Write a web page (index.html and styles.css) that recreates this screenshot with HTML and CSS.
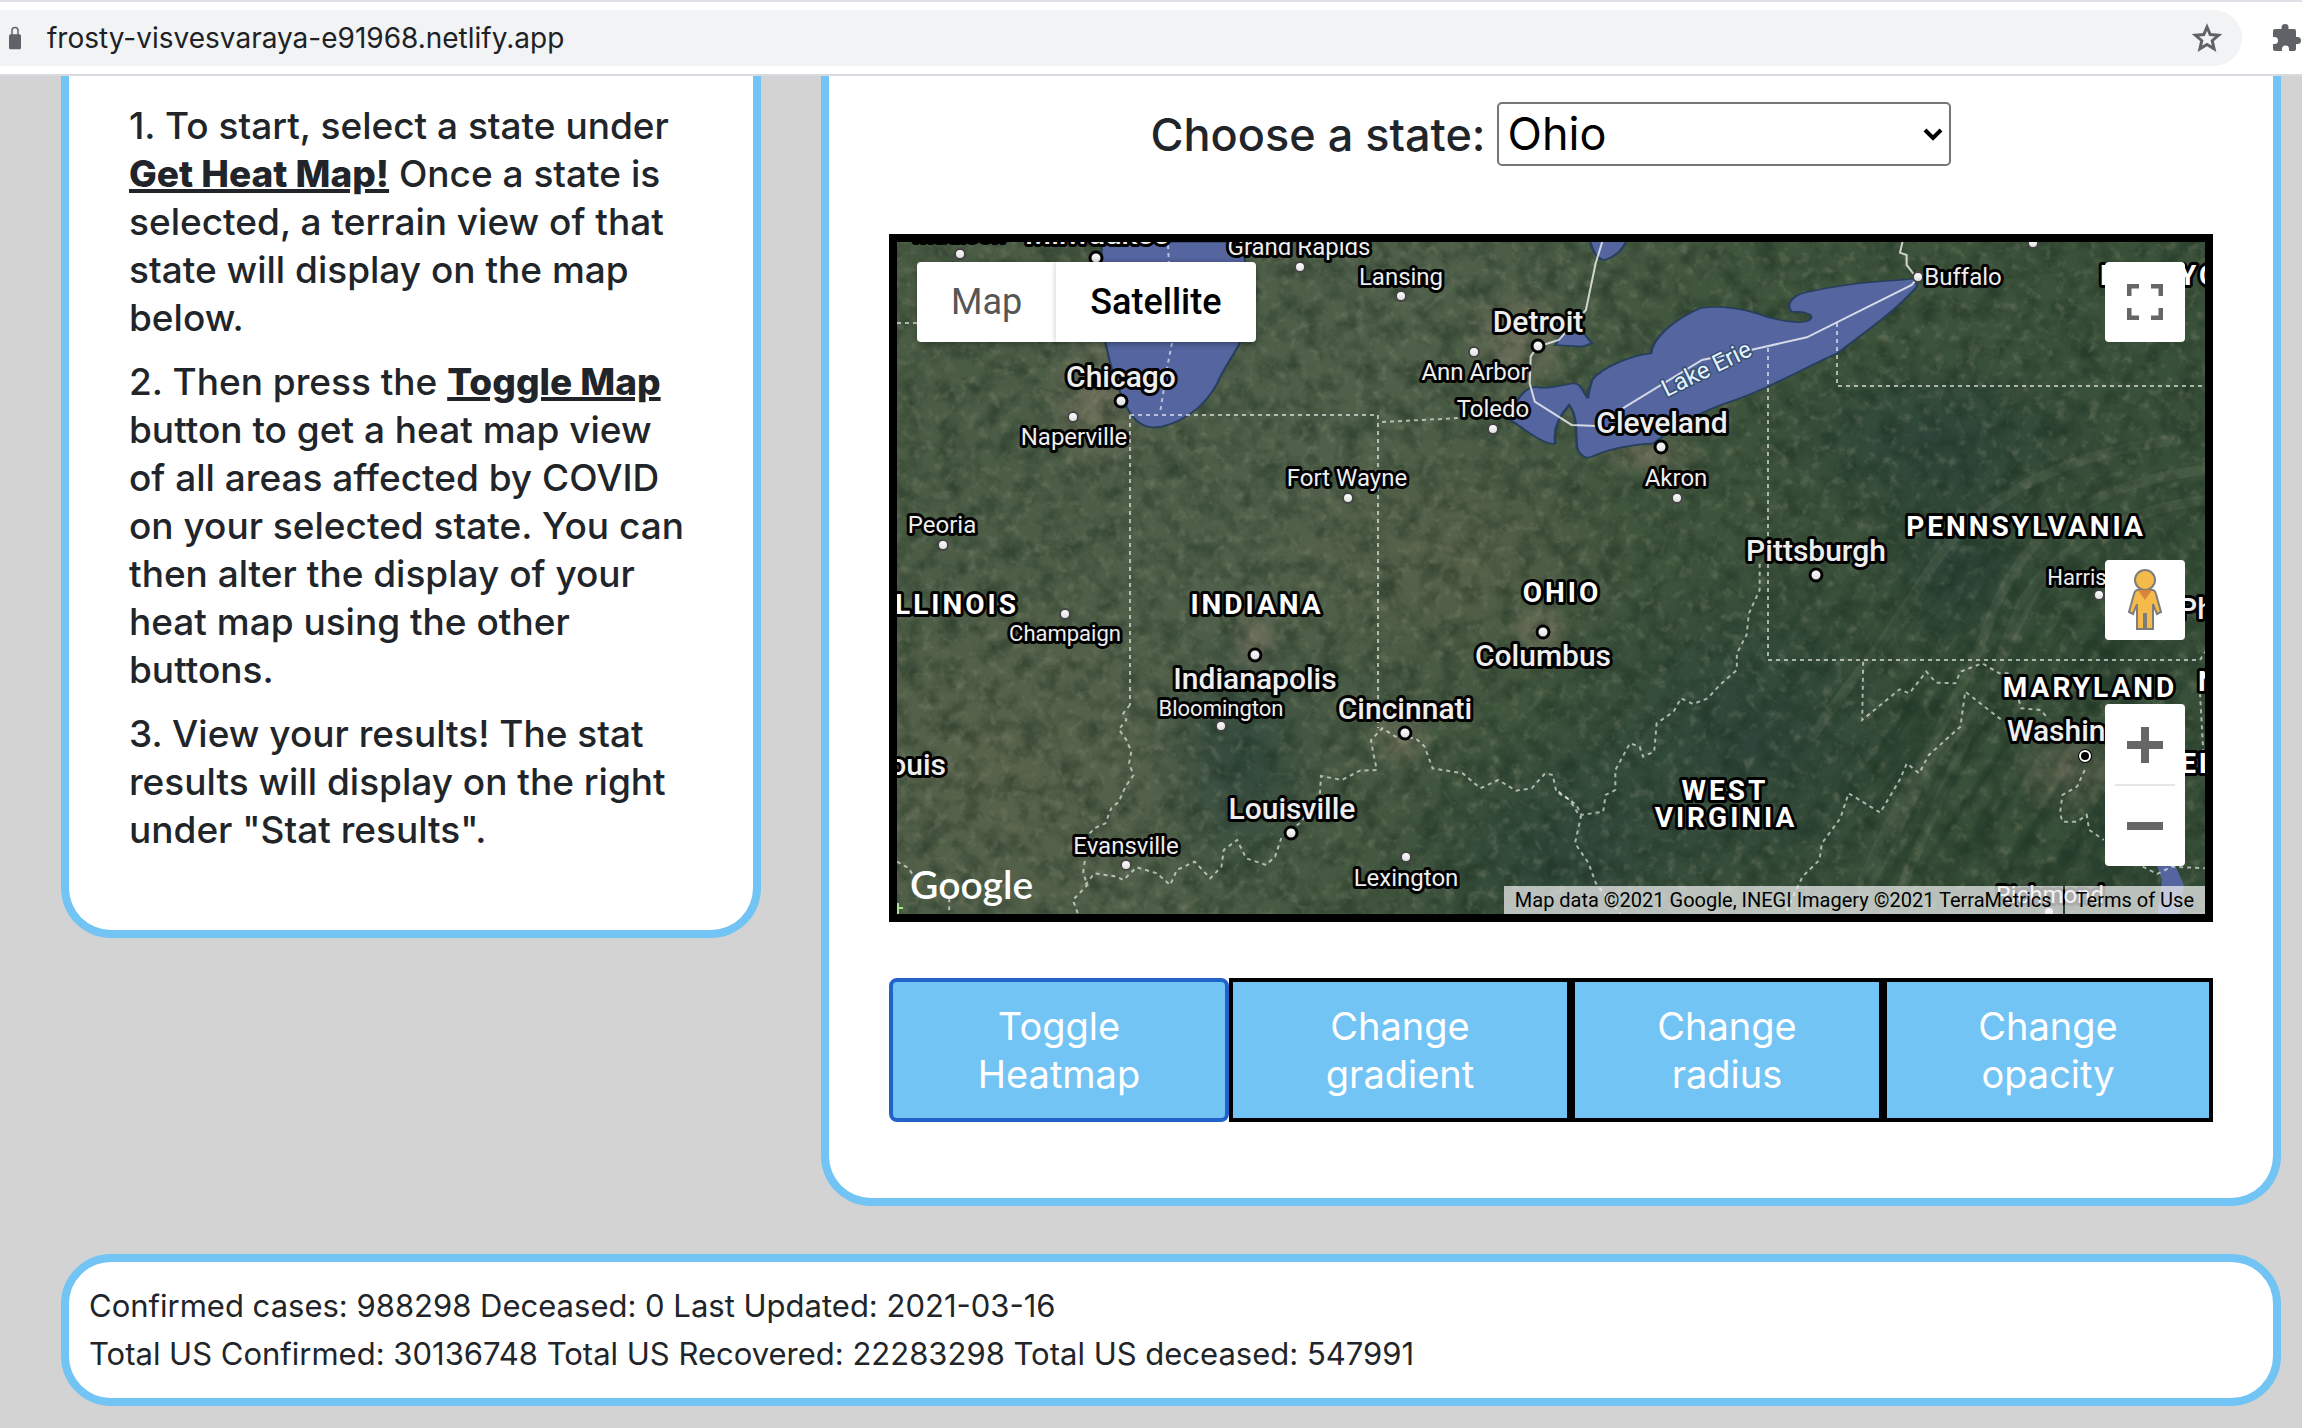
FILE: index.html
```html
<!DOCTYPE html>
<html lang="en">
<head>
<meta charset="utf-8">
<title>COVID Heat Map</title>
<link rel="stylesheet" href="styles.css">
</head>
<body>
<header class="toolbar">
  <div class="address">
    <svg class="lock" viewBox="0 0 16 32" aria-hidden="true"><rect y="11" width="16" height="20" rx="2"/><path d="M4 12V6a4 4 0 0 1 8 0v6" class="shackle"/></svg>
    <span class="url">frosty-visvesvaraya-e91968.netlify.app</span>
    <button class="icon-button" aria-label="Bookmark"><svg width="30" height="30" viewBox="0 0 30 30"><path class="star" d="M15 4l3.2 7.6 8.300.7-6.300 5.400 1.900 8.100-7.100-4.300-7.100 4.300 1.900-8.100-6.300-5.400 8.300-.7z"/></svg></button>
  </div>
  <button class="icon-button" aria-label="Extensions"><svg width="30" height="30" viewBox="0 0 30 30"><path class="puzzle" d="M3 6h6.500V4.500a3.500 3.500 0 0 1 7 0V6H22q2 0 2 2v6h1.500a3.500 3.500 0 0 1 0 7H24v5q0 2-2 2h-5v-2a3.500 3.500 0 0 0-7 0v2H3q-2 0-2-2v-5h1.500a3.500 3.500 0 0 0 0-7H1V8q0-2 2-2z"/></svg></button>
</header>

<main class="page">
  <div class="columns">
    <section class="card steps">
      <p>1. To start, select a state under <strong>Get Heat Map!</strong> Once a state is selected, a terrain view of that state will display on the map below.</p>
      <p>2. Then press the <strong>Toggle Map</strong> button to get a heat map view of all areas affected by COVID on your selected state. You can then alter the display of your heat map using the other buttons.</p>
      <p>3. View your results! The stat results will display on the right under "Stat results".</p>
    </section>

    <section class="card viewer">
      <div class="picker">
        <label for="state">Choose a state:</label>
        <div class="select-box">
          <select id="state"><option>Ohio</option></select>
          <svg class="chevron" viewBox="0 0 20 14" aria-hidden="true"><path d="M2 2l8 8 8-8"/></svg>
        </div>
      </div>

      <div class="map">
        <svg class="terrain" viewBox="897 242 1308 672" preserveAspectRatio="xMidYMid slice">
          <defs>
            <linearGradient id="land" x1="0" y1="0" x2="1" y2=".25">
              <stop offset="0" stop-color="#4a5b44"/><stop offset=".4" stop-color="#4f5f49"/><stop offset=".62" stop-color="#3f543c"/><stop offset="1" stop-color="#384f39"/>
            </linearGradient>
            <radialGradient id="dark"><stop offset="0" stop-color="#2b443a" stop-opacity=".85"/><stop offset="1" stop-color="#2b443a" stop-opacity="0"/></radialGradient>
            <radialGradient id="tan"><stop offset="0" stop-color="#817a66" stop-opacity=".7"/><stop offset="1" stop-color="#817a66" stop-opacity="0"/></radialGradient>
            <radialGradient id="olive"><stop offset="0" stop-color="#5c644c" stop-opacity=".8"/><stop offset="1" stop-color="#5c644c" stop-opacity="0"/></radialGradient>
            <filter id="shade" x="0" y="0" width="100%" height="100%" color-interpolation-filters="sRGB"><feTurbulence type="fractalNoise" baseFrequency=".05" numOctaves="5" seed="7"/><feColorMatrix values="0 0 0 0 .1 0 0 0 0 .18 0 0 0 0 .12 2.400 0 0 0 -1"/></filter>
            <filter id="specks" x="0" y="0" width="100%" height="100%" color-interpolation-filters="sRGB"><feTurbulence type="fractalNoise" baseFrequency=".09" numOctaves="4" seed="12"/><feColorMatrix values="0 0 0 0 .55 0 0 0 0 .56 0 0 0 0 .46 0 3 0 0 -1.600"/></filter>
            <filter id="ridge" x="0" y="0" width="100%" height="100%" color-interpolation-filters="sRGB"><feTurbulence type="fractalNoise" baseFrequency=".005 .06" numOctaves="4" seed="3"/><feColorMatrix values="0 0 0 0 .1 0 0 0 0 .2 0 0 0 0 .14 3 0 0 0 -1.300"/></filter>
            <linearGradient id="pin" x2="0" y2="1"><stop offset="0" stop-color="#fff"/><stop offset="1" stop-color="#ddd"/></linearGradient>
            <radialGradient id="fade"><stop offset=".4" stop-color="#fff"/><stop offset="1" stop-color="#000"/></radialGradient>
            <mask id="appalachia" maskUnits="userSpaceOnUse" x="1500" y="242" width="705" height="672"><ellipse cx="2010" cy="720" rx="300" ry="330" fill="url(#fade)"/></mask>
          </defs>
          <rect x="897" y="242" width="1308" height="672" fill="url(#land)"/>
          <ellipse cx="1000" cy="760" rx="240" ry="200" fill="url(#olive)"/>
          <ellipse cx="1450" cy="560" rx="200" ry="140" fill="url(#olive)"/>
          <ellipse cx="1240" cy="760" rx="90" ry="150" fill="url(#dark)"/>
          <ellipse cx="1560" cy="860" rx="170" ry="150" fill="url(#dark)"/>
          <ellipse cx="1740" cy="740" rx="210" ry="190" fill="url(#dark)"/>
          <ellipse cx="1930" cy="440" rx="190" ry="90" fill="url(#dark)"/>
          <ellipse cx="1960" cy="560" rx="100" ry="120" fill="url(#dark)"/>
          <ellipse cx="1100" cy="400" rx="60" ry="80" fill="url(#tan)"/>
          <ellipse cx="1520" cy="340" rx="60" ry="60" fill="url(#tan)"/>
          <ellipse cx="1650" cy="455" rx="60" ry="24" fill="url(#tan)"/>
          <ellipse cx="2070" cy="770" rx="60" ry="50" fill="url(#tan)"/>
          <ellipse cx="1255" cy="640" rx="30" ry="36" fill="url(#tan)"/>
          <ellipse cx="1540" cy="630" rx="36" ry="30" fill="url(#tan)"/>
          <ellipse cx="1400" cy="740" rx="36" ry="30" fill="url(#tan)"/>
          <g class="ridges">
            <path d="M2205 470C2120 480 2030 510 1990 620S1890 800 1850 914"/>
            <path d="M2205 500C2130 510 2060 540 2030 600S1960 750 1890 914"/>
            <path d="M2180 440C2080 450 1980 490 1930 570S1850 680 1810 740"/>
            <path d="M2060 560C2000 600 2010 680 1960 730S1900 840 1860 900"/>
          </g>
          <rect class="shade" x="897" y="242" width="1308" height="672" filter="url(#shade)"/>
          <rect class="specks" x="897" y="242" width="1308" height="672" filter="url(#specks)"/>
          <g class="shade" mask="url(#appalachia)"><g transform="rotate(-56 1950 680)"><rect x="1450" y="200" width="1000" height="960" filter="url(#ridge)"/></g></g>

          <g class="water">
            <path transform="translate(820 60) scale(.4464 .3333)" d="M632 545C625 700 630 800 640 850C650 920 665 980 680 1020C700 1090 730 1110 765 1100C830 1080 870 1020 890 970C905 920 930 880 940 850C960 700 955 600 945 545Z"/>
            <g transform="translate(1500 60) scale(.5115 .3333)">
              <path d="M815 655C770 665 700 660 590 700C565 715 560 740 570 755C600 755 615 765 605 780C590 795 545 780 520 770C480 745 430 735 390 745C340 780 300 830 295 880C260 885 200 920 180 960C175 985 172 1000 172 1015C160 990 158 970 145 970C120 975 90 990 70 980C50 985 30 1010 20 1080C50 1110 90 1160 108 1150C104 1110 115 1070 135 1035C152 1070 148 1120 150 1150C150 1180 165 1200 180 1190C200 1175 240 1155 300 1150C350 1090 400 1050 450 1025C520 990 600 920 660 880C700 830 770 760 815 680Z"/>
              <path d="M108 855L122 820 160 812 180 850 160 860Z"/>
              <path d="M175 540C180 570 190 600 205 600C225 590 240 570 248 540Z"/>
            </g>
            <path class="bay" transform="translate(1540 480) scale(.486 .3333)" d="M1268 1150H1305L1325 1215 1315 1310H1270L1280 1200Z"/>
          </g>

          <g class="border">
            <path d="M897 323h20M1168 245l1 20M1172 343l-4 20-8 50M1130 415h248M1130 415V705M1378 415V728M1382 422l78-4"/>
            <path transform="translate(880 480) scale(.4464 .3333)" d="M560 675L545 700 552 720 535 748 552 780 563 815 558 850 568 885 550 920 535 965 518 985 505 1030 480 1045 470 1060 460 1130 455 1180 465 1215 432 1260 443 1300M460 1215L480 1180 530 1190 545 1200 575 1162 620 1180 650 1215 665 1170 705 1145 740 1195 765 1160 770 1110 800 1080 820 1135 865 1155 885 1130 900 1070 940 1030 985 950 988 888 1035 900 1075 872 1113 870 1105 820 1100 780 1125 745 1155 770 1200 775 1220 800 1238 865 1305 880 1345 925 1385 900 1425 932 1460 925 1490 880 1507 885 1515 935 1545 960 1568 1010M38 1145L65 1165 75 1190M155 1255V1300"/>
            <path d="M1768 348V660H2200l5-8M1837 323v63h368"/>
            <path transform="translate(1540 480) scale(.486 .3333)" d="M38 935L75 975 85 1005 130 995 135 945 155 930 155 870 185 790 205 800 212 830 235 815 240 730 275 695 290 655 315 672 345 655 370 615 405 570 405 520 425 465 430 400 452 330 452 250M85 1005L72 1090 100 1150 115 1210 165 1300M665 545L663 720 740 628 760 640 795 575 815 608 855 610 865 575 910 550 945 580 965 580M948 718L875 635 865 740 800 825 780 880 755 850 740 900 700 998 635 940 618 1015 580 1090 575 1140 540 1190 505 1300M985 660L990 685 1030 690 1045 715M1121 870L1105 920 1075 945 1070 1000 1075 1025 1105 1025 1125 1005 1130 1050 1160 1080M1358 640L1365 820M1240 1160L1270 1182 1300 1160 1368 1165"/>
          </g>
          <path class="frontier" transform="translate(1500 60) scale(.5115 .3333)" d="M200 545L187 610 168 750 115 840 90 852 74 858 60 890 58 970 68 1025 140 1095 190 1098M240 1045L395 900 490 870 600 832 805 675 815 655 795 615 795 585 782 578 787 545"/>

          <g class="dots">
            <circle cx="960" cy="254" r="5"/><circle cx="1300" cy="267" r="5"/><circle cx="1401" cy="296" r="5"/><circle cx="1474" cy="352" r="5"/><circle cx="1493" cy="429" r="5"/><circle cx="1073" cy="417" r="5"/><circle cx="1348" cy="498" r="5"/><circle cx="1918" cy="277" r="5"/><circle cx="1677" cy="498" r="5"/><circle cx="2033" cy="243" r="5"/><circle cx="943" cy="545" r="5"/><circle cx="1065" cy="614" r="5"/><circle cx="1221" cy="726" r="5"/><circle cx="1126" cy="865" r="5"/><circle cx="1406" cy="857" r="5"/><circle cx="2099" cy="595" r="5"/><circle cx="2049" cy="912" r="5"/>
          </g>
          <g class="dots major">
            <circle cx="1096" cy="258" r="6"/><circle cx="1538" cy="346" r="6"/><circle cx="1121" cy="401" r="6"/><circle cx="1661" cy="447" r="6"/><circle cx="1543" cy="632" r="6"/><circle cx="1255" cy="655" r="6"/><circle cx="1405" cy="733" r="6"/><circle cx="1291" cy="833" r="6"/><circle cx="1816" cy="575" r="6"/>
          </g>
          <circle cx="2085" cy="756" r="7"/><circle class="capital" cx="2085" cy="756" r="5"/>

          <g class="town">
            <text x="959" y="242">Madison</text><text x="1299" y="255">Grand Rapids</text><text x="1401" y="285">Lansing</text><text x="1475" y="380">Ann Arbor</text><text x="1493" y="417">Toledo</text><text x="1074" y="445">Naperville</text><text x="1347" y="486">Fort Wayne</text><text x="1676" y="486">Akron</text><text x="942" y="533">Peoria</text><text x="1126" y="854">Evansville</text><text x="1406" y="886">Lexington</text><text x="1963" y="285">Buffalo</text><text x="2050" y="903">Richmond</text>
          </g>
          <g class="village">
            <text x="1065" y="641">Champaign</text><text x="1221" y="716">Bloomington</text><text x="2099" y="585">Harrisburg</text>
          </g>
          <g class="city">
            <text x="1097" y="244">Milwaukee</text><text x="1538" y="332">Detroit</text><text x="1121" y="387">Chicago</text><text x="1662" y="433">Cleveland</text><text x="1816" y="561">Pittsburgh</text><text x="1543" y="666">Columbus</text><text x="1255" y="689">Indianapolis</text><text x="1405" y="719">Cincinnati</text><text x="1292" y="819">Louisville</text><text class="from-end" x="946" y="775">St. Louis</text><text class="from-start" x="2007" y="741">Washington</text><text class="from-start" x="2178" y="619">Philadelphia</text>
          </g>
          <g class="state">
            <text class="from-end" x="1019" y="614">ILLINOIS</text><text x="1257" y="614">INDIANA</text><text x="1562" y="602">OHIO</text><text x="2026" y="536">PENNSYLVANIA</text><text x="2090" y="697">MARYLAND</text><text x="1725" y="800">WEST</text><text x="1726" y="827">VIRGINIA</text><text class="from-start" x="2100" y="285">NEW YORK</text><text class="from-start" x="2198" y="691">NEW JERSEY</text><text class="from-start" x="2159" y="773">DELAWARE</text>
          </g>
          <text class="lake" transform="translate(1710 376) rotate(-26)">Lake Erie</text>
          <path class="park" d="M894 908h9M898 903v11"/>
        </svg>

        <div class="map-type">
          <button class="type">Map</button><button class="type active">Satellite</button>
        </div>
        <button class="control fullscreen" aria-label="Toggle fullscreen"><svg width="36" height="36" viewBox="0 0 36 36"><path class="corners" d="M2 12V2h10M24 2h10v10M34 24v10H24M12 34H2V24"/></svg></button>
        <div class="side-controls">
          <button class="control" aria-label="Street View"><svg width="36" height="62" viewBox="0 0 36 62"><g class="pegman"><path d="M11 21h14q3 0 4 4l5 18-4 2-4-10v25h-7V45h-2v15h-7V35l-4 10-4-2 5-18q1-4 4-4z"/><circle cx="18" cy="11" r="10"/></g><path class="collar" d="M11 21h14l-7 10z"/></svg></button>
          <div class="zoom">
            <button class="control" aria-label="Zoom in"><svg width="36" height="36" viewBox="0 0 36 36"><path d="M14 0h8v14h14v8H22v14h-8V22H0v-8h14z"/></svg></button>
            <button class="control" aria-label="Zoom out"><svg width="36" height="36" viewBox="0 0 36 36"><path d="M0 14h36v8H0z"/></svg></button>
          </div>
        </div>
        <span class="brand">Google</span>
        <div class="credits"><span>Map data ©2021 Google, INEGI Imagery ©2021 TerraMetrics</span><a href="#terms">Terms of Use</a></div>
      </div>

      <div class="actions">
        <button class="action focused">Toggle Heatmap</button>
        <button class="action">Change gradient</button>
        <button class="action">Change radius</button>
        <button class="action">Change opacity</button>
      </div>
    </section>
  </div>

  <section class="card stats">
    <div>Confirmed cases: 988298 Deceased: 0 Last Updated: 2021-03-16</div>
    <div>Total US Confirmed: 30136748 Total US Recovered: 22283298 Total US deceased: 547991</div>
  </section>
</main>
</body>
</html>
```
FILE: styles.css
```css
* { box-sizing: border-box; }
body {
  margin: 0;
  background: #d3d3d3;
  color: #212529;
  font-family: Inter, "Liberation Sans", sans-serif;
}
button { font: inherit; padding: 0; border: 0; background: none; }

.toolbar {
  display: flex;
  align-items: center;
  height: 76px;
  overflow: hidden;
  background: #fff;
  border-top: 2px solid #dfe0e5;
  border-bottom: 2px solid #dadbe0;
}
.address {
  flex: 1;
  display: flex;
  align-items: center;
  height: 56px;
  padding: 0 20px 0 7px;
  border-radius: 0 28px 28px 0;
  background: #f1f3f5;
}
.lock { width: 16px; height: 24px; fill: #5f6368; }
.shackle { fill: none; stroke: #5f6368; stroke-width: 2; }
.url { flex: 1; margin-left: 24px; font-size: 28px; color: #202124; }
.toolbar > .icon-button { width: 30px; margin: 0 0 0 30px; }
.icon-button svg { display: block; }
.star { fill: none; stroke: #5f6368; stroke-width: 3; }
.puzzle { fill: #5f6368; }

.page { padding: 0 21px 22px 61px; }
.columns {
  display: grid;
  grid-template-columns: 700fr 1460fr;
  gap: 60px;
  align-items: start;
  margin-bottom: 48px;
}
.card { border: 8px solid #72c4f5; border-radius: 50px; background: #fff; }
.columns .card { border-top: 0; border-top-left-radius: 0; border-top-right-radius: 0; }

.steps { padding: 26px 60px 60px; font-size: 37px; font-weight: 500; line-height: 48px; }
.steps p { margin: 0 0 16px; }
.steps strong { font-weight: 800; text-decoration: underline; text-decoration-thickness: 4px; }

.viewer { padding: 26px 60px 76px; }
.picker { display: flex; justify-content: center; align-items: center; gap: 12px; margin-bottom: 68px; font-size: 45px; font-weight: 500; }
.select-box { position: relative; width: 454px; }
.select-box select {
  display: block;
  width: 100%;
  height: 64px;
  padding: 0 8px;
  appearance: none;
  border: 2px solid #767676;
  border-radius: 5px;
  background: #fff;
  color: #000;
  font: 400 45px/58px Inter, "Liberation Sans", sans-serif;
}
.chevron { position: absolute; right: 8px; top: 26px; width: 20px; height: 14px; fill: none; stroke: #000; stroke-width: 4; }

.map {
  position: relative;
  height: 688px;
  margin-bottom: 56px;
  border: 8px solid #000;
  overflow: hidden;
  font-family: Roboto, "Liberation Sans", sans-serif;
}
.terrain { display: block; width: 100%; height: 100%; }
.shade { opacity: .5; }
.specks { opacity: .35; }
.ridges { fill: none; stroke: #62705a; stroke-width: 10; opacity: .35; }
.water { fill: #5465a0; stroke: #263f5c; stroke-width: 5; }
.bay { stroke: none; }
.border, .frontier { fill: none; }
.border path, .frontier { vector-effect: non-scaling-stroke; }
.border { stroke: #fff; stroke-opacity: .6; stroke-width: 2; stroke-dasharray: 4 4; }
.frontier { stroke: #fff; stroke-opacity: .75; stroke-width: 2; }
.dots { fill: url(#pin); stroke: #444; stroke-width: 2; }
.dots.major { stroke: #000; stroke-width: 3; }
.capital { fill: #000; stroke: #fff; stroke-width: 2; }
.park { fill: none; stroke: #a5e58c; stroke-width: 2; }
.terrain text { text-anchor: middle; fill: #eee; stroke: #000; stroke-width: 6px; stroke-linejoin: round; paint-order: stroke; }
.terrain .from-end { text-anchor: end; }
.terrain .from-start { text-anchor: start; }
.town { font-size: 24px; }
.village { font-size: 22px; }
.city { font-size: 30px; font-weight: 500; }
.state { font-size: 28px; font-weight: 700; letter-spacing: 3px; }
.terrain .state text { fill: #fff; }
.terrain .lake { font-size: 24px; fill: #e6f0ff; stroke: #33506f; stroke-width: 3px; }

.map-type { position: absolute; left: 20px; top: 20px; display: flex; height: 80px; border-radius: 4px; background: #fff; box-shadow: 0 2px 6px rgba(0, 0, 0, .3); font-size: 36px; }
.type { padding: 0 34px; color: #565656; }
.type.active { color: #000; font-weight: 500; box-shadow: -2px 0 4px rgba(0, 0, 0, .12); }
.control { display: grid; place-items: center; width: 80px; height: 80px; border-radius: 4px; background: #fff; fill: #666; }
.fullscreen { position: absolute; right: 20px; top: 20px; }
.corners { fill: none; stroke: #666; stroke-width: 5; }
.side-controls { position: absolute; right: 20px; bottom: 48px; display: grid; gap: 64px; }
.pegman { fill: #f5bb4a; stroke: #7d7d7d; stroke-width: 2; }
.collar { fill: #d8843c; }
.zoom { border-radius: 4px; background: linear-gradient(#e6e6e6, #e6e6e6) center / 60px 2px no-repeat #fff; }
.zoom .control { height: 81px; background: none; }
.brand { position: absolute; left: 13px; bottom: 6px; color: #fff; font: 600 39px/48px Lato, sans-serif; }
.credits { position: absolute; right: 0; bottom: 0; display: flex; gap: 2px; font-size: 20px; line-height: 28px; color: #000; }
.credits > * { padding: 0 11px; background: rgba(245, 245, 245, .7); color: inherit; text-decoration: none; }

.actions { display: grid; grid-template-columns: 340fr 342fr 312fr 330fr; }
.action {
  padding: 20px 60px;
  border: 4px solid #000;
  background: #72c4f5;
  color: #fff;
  font-size: 38px;
  line-height: 48px;
}
.action.focused { border-color: #2163c9; border-radius: 8px; }

.stats { padding: 20px; font-size: 31px; line-height: 48px; }
```
